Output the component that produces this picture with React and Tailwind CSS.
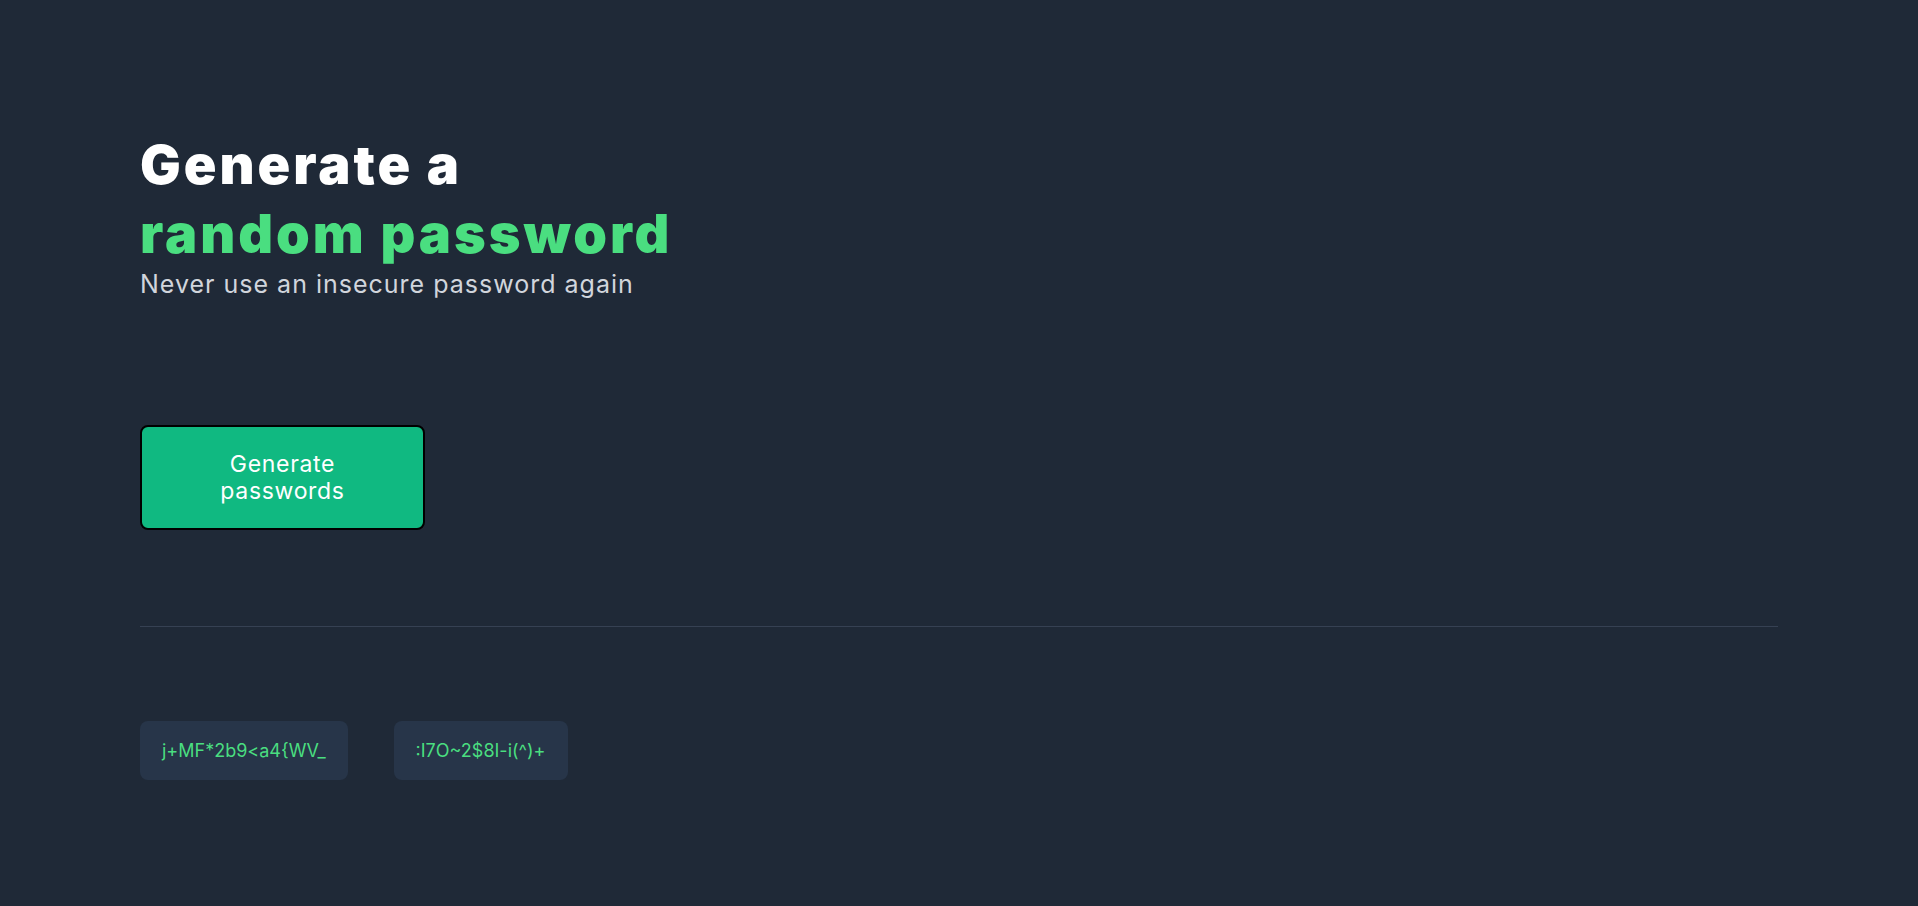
export default function App() {
  const passwords = ['j+MF*2b9<a4{WV_', ':I7O~2$8I-i(^)+'];

  return (
    <div className="min-h-screen bg-[#1f2937] font-['Inter',sans-serif]">
      <div className="px-[140px] pt-[130px]">
        {/* Hero */}
        <h1 className="text-[54px] leading-[69px] font-black tracking-[0.055em] text-white">
          Generate a
          <br />
          <span className="text-[#4ade80]">random password</span>
        </h1>
        <p className="text-[25px] leading-8 tracking-[0.04em] text-gray-300">Never use an insecure password again</p>

        <button className="mt-[125px] flex h-[105px] w-[285px] items-center justify-center rounded-lg border-2 border-black bg-[#10b981] px-10 text-[23px] leading-[27px] tracking-[0.03em] text-white">
          Generate passwords
        </button>

        {/* Divider */}
        <div className="mt-[96px] border-t border-gray-700" />

        {/* Results */}
        <div className="mt-[94px] flex gap-[46px]">
          {passwords.map(pw => (
            <div key={pw} className="rounded-lg bg-[#273549] px-[22px] py-4 text-lg leading-[27px] text-[#4ade80]">
              {pw}
            </div>
          ))}
        </div>
      </div>
    </div>
  );
}
